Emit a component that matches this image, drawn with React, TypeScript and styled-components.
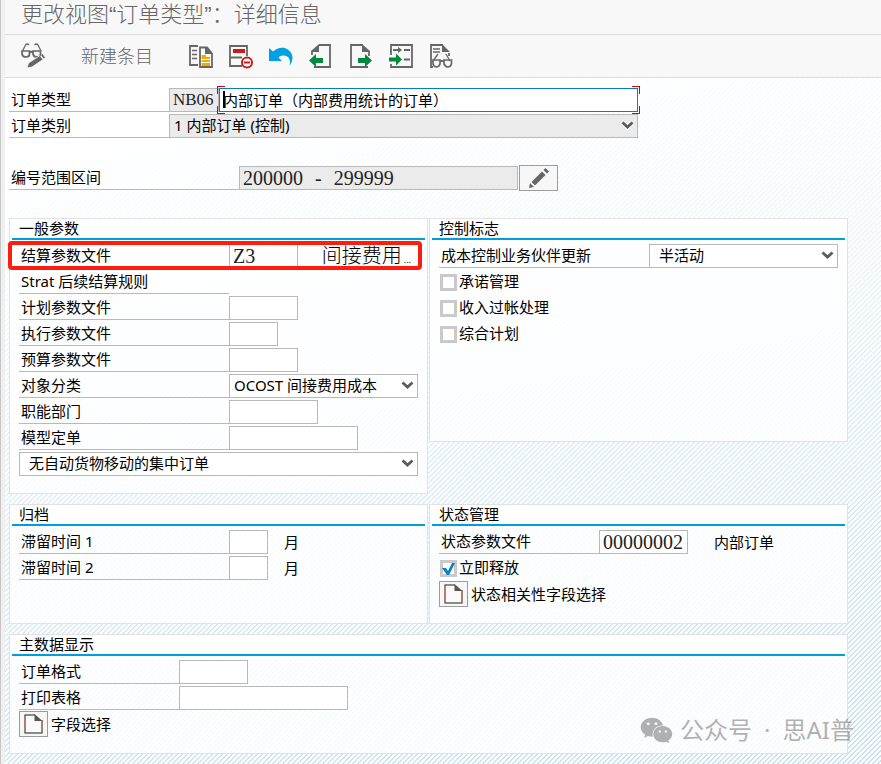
import React, { useState } from "react";
import styled, { createGlobalStyle } from "styled-components";
import { FaWeixin } from "react-icons/fa";

const UI_FONT = '"Noto Sans", "Noto Sans CJK SC", sans-serif';
const DATA_FONT = '"Liberation Serif", "Noto Sans CJK SC", serif';
const LINE = "#b9b9b9";
const ACCENT = "#009de0";
const INK = "#666666";

const GlobalStyle = createGlobalStyle`
  * { box-sizing: border-box; }
  body { margin: 0; font-family: ${UI_FONT}; font-size: 15px; color: #000; background: #fff; }
  button, input, select { font: inherit; color: inherit; margin: 0; }
`;

const Shell = styled.div`
  position: relative;
  display: flex;
  flex-direction: column;
  min-height: 100vh;
  border-left: 1px solid #c6c6c6;
`;

const Frame = styled.div`
  flex: 1;
  display: flex;
  flex-direction: column;
  border-left: 4px solid #f1f0f0;
`;

const TitleBar = styled.header`
  height: 35px;
  padding: 0 16px;
  display: flex;
  align-items: center;
  background: #f8f8f8;
  border-bottom: 1px solid #dcdcdc;
`;

const Title = styled.h1`
  margin: 0;
  padding-bottom: 4px;
  font-family: "Liberation Sans", "Noto Sans CJK SC", sans-serif;
  font-size: 22px;
  line-height: 28px;
  font-weight: 300;
  color: #666;
`;

const Toolbar = styled.nav`
  height: 43px;
  padding: 0 16px;
  display: flex;
  align-items: center;
  gap: 16px;
  background: #f8f8f8;
  border-bottom: 1px solid #dcdcdc;
`;

const ToolButton = styled.button`
  width: 24px;
  height: 28px;
  padding: 0;
  border: 0;
  background: none;
  display: flex;
  align-items: center;
  justify-content: center;
`;

const TextButton = styled.button`
  padding: 0;
  margin: 0 20px;
  border: 0;
  background: none;
  font-size: 18px;
  font-weight: 300;
  line-height: 28px;
  color: #666;
`;

const Body = styled.main`
  flex: 1;
  padding: 10px 33px 10px 4px;
  background:
    linear-gradient(170deg, #fff 8%, rgba(255, 255, 255, 0.8) 25%, rgba(255, 255, 255, 0.4) 55%, rgba(255, 255, 255, 0) 100%),
    linear-gradient(135deg, #fff 25%, #c6e1f1 25% 50%, #fff 50% 75%, #c6e1f1 75%) 0 0 / 5px 5px;
`;

const Rows = styled.div<{ $space?: number }>`
  display: flex;
  flex-direction: column;
  gap: 2px;
  margin-bottom: ${(p) => p.$space ?? 0}px;
`;

const Row = styled.div`
  position: relative;
  display: flex;
  align-items: center;
  height: 24px;
`;

const Label = styled.label<{ $width: number }>`
  flex: none;
  width: ${(p) => p.$width}px;
  height: 24px;
  padding-left: 2px;
  line-height: 23px;
  border-bottom: 1px solid ${LINE};
  white-space: nowrap;
`;

const Input = styled.input<{ $width: number; $size?: number }>`
  flex: none;
  width: ${(p) => p.$width}px;
  height: 24px;
  padding: 0 3px;
  border: 1px solid ${LINE};
  border-radius: 0;
  background: #fff;
  color: #222;
  font-family: ${DATA_FONT};
  font-size: ${(p) => p.$size ?? 20}px;
  line-height: 22px;
  outline: none;
  &:read-only { background: #ebebeb; }
`;

const RangeField = styled.output`
  width: 279px;
  height: 24px;
  padding: 0 3px;
  display: flex;
  gap: 12px;
  border: 1px solid ${LINE};
  background: #ebebeb;
  color: #222;
  font-family: ${DATA_FONT};
  font-size: 20px;
  line-height: 22px;
`;

const FocusField = styled.div`
  position: relative;
  width: 419px;
  height: 24px;
`;

const FocusInput = styled.input`
  width: 100%;
  height: 24px;
  padding: 0 3px 2px;
  border: 1px solid #0a7cc0;
  background: #fff;
  line-height: 20px;
  outline: none;
`;

const FocusCorners = styled.span`
  position: absolute;
  inset: -2px;
  pointer-events: none;
  --c: linear-gradient(#d4040c, #d4040c);
  background:
    var(--c) 0 0 / 8px 1px, var(--c) 0 0 / 1px 8px,
    var(--c) 100% 0 / 8px 1px, var(--c) 100% 0 / 1px 8px,
    var(--c) 0 100% / 8px 1px, var(--c) 0 100% / 1px 8px,
    var(--c) 100% 100% / 8px 1px, var(--c) 100% 100% / 1px 8px;
  background-repeat: no-repeat;
`;

const Caret = styled.span`
  position: absolute;
  left: 4px;
  top: 3px;
  width: 2px;
  height: 17px;
  background: #000;
`;

const SelectBox = styled.div<{ $width: string }>`
  position: relative;
  width: ${(p) => p.$width};
  height: 24px;
`;

const SelectInput = styled.select<{ $muted?: boolean; $indent?: number }>`
  appearance: none;
  width: 100%;
  height: 24px;
  padding: 0 24px 2px ${(p) => p.$indent ?? 4}px;
  border: 1px solid ${LINE};
  border-radius: 0;
  background: ${(p) => (p.$muted ? "#ebebeb" : "#fff")};
  outline: none;
`;

const Chevron = styled.svg`
  position: absolute;
  right: 4px;
  top: 7px;
  pointer-events: none;
`;

const EditButton = styled.button`
  width: 39px;
  height: 26px;
  margin-left: 1px;
  padding: 0;
  display: flex;
  align-items: center;
  justify-content: center;
  border: 1px solid #9c9c9c;
  background: #f7f7f7;
`;

const Panels = styled.div`
  display: grid;
  grid-template-columns: 1fr 1fr;
  column-gap: 1px;
  row-gap: 10px;
`;

const Panel = styled.section<{ $wide?: boolean; $short?: boolean }>`
  position: relative;
  min-width: 0;
  grid-column: ${(p) => (p.$wide ? "1 / -1" : "auto")};
  align-self: ${(p) => (p.$short ? "start" : "stretch")};
  min-height: ${(p) => (p.$short ? 224 : 120)}px;
  padding: 0 2px 17px;
  border: 1px solid #e2e2e2;
  background: rgba(255, 255, 255, 0.8);
`;

const PanelTitle = styled.h2`
  margin: 0 -2px;
  padding: 0 2px;
  background: #fff;
  font-size: 15px;
  font-weight: 400;
  line-height: 19px;
  & > span { display: block; padding-left: 7px; border-bottom: 2px solid ${ACCENT}; }
`;

const PanelRows = styled(Rows)`
  padding: 4px 7px 0;
`;

const Note = styled.span<{ $gap: number }>`
  margin-left: ${(p) => p.$gap}px;
  line-height: 22px;
  white-space: nowrap;
`;

const ProfileText = styled.span`
  flex: 1;
  display: flex;
  align-items: baseline;
  justify-content: flex-end;
  padding-right: 7px;
  padding-top: 3px;
  gap: 2px;
  font-size: 20px;
  font-weight: 300;
  line-height: 24px;
  & > small { font-size: 9px; font-weight: 400; }
`;

const Highlight = styled.span`
  position: absolute;
  inset: -3px -4px -2px -11px;
  border: 4px solid #ff1d0f;
  border-radius: 4px;
  pointer-events: none;
`;

const CheckLabel = styled.label`
  display: flex;
  align-items: center;
  gap: 2px;
  padding-left: 1px;
  line-height: 20px;
`;

const CheckText = styled.span`
  padding-bottom: 2px;
`;

const CheckBox = styled.span`
  position: relative;
  display: flex;
  width: 17px;
  height: 17px;
`;

const CheckInput = styled.input`
  appearance: none;
  width: 17px;
  height: 17px;
  border: 3px solid #c9c9c9;
  background: #fff;
`;

const Tick = styled.svg`
  position: absolute;
  inset: 0;
  pointer-events: none;
`;

const PageButton = styled.button`
  flex: none;
  width: 29px;
  height: 26px;
  padding: 0;
  display: flex;
  align-items: center;
  justify-content: center;
  border: 1px solid #9c9c9c;
  background: #f7f7f7;
`;

const Watermark = styled.div`
  position: absolute;
  right: 27px;
  bottom: 17px;
  display: flex;
  align-items: center;
  gap: 7px;
  font-size: 24px;
  line-height: 34px;
  color: rgba(125, 125, 125, 0.6);
  pointer-events: none;
  white-space: nowrap;
`;

const WatermarkText = styled.span`
  display: flex;
  gap: 12px;
`;

type Option = { id: string; value: string; width?: string; muted?: boolean; indent?: number; label?: string };

function Select({ id, value, width = "189px", muted, indent, label }: Option) {
  return (
    <SelectBox $width={width}>
      <SelectInput id={id} defaultValue={value} $muted={muted} $indent={indent} aria-label={label}>
        <option>{value}</option>
      </SelectInput>
      <Chevron width="13" height="9" viewBox="0 0 13 9">
        <path d="M2 2l4.500 4L11 2" fill="none" stroke="#fff" strokeWidth="5" />
        <path d="M1.500 1.500l5 4.500 5-4.500" fill="none" stroke="#5c5c5c" strokeWidth="2.800" />
      </Chevron>
    </SelectBox>
  );
}

function Check({ text, initial = false }: { text: string; initial?: boolean }) {
  const [on, setOn] = useState(initial);
  return (
    <Row>
      <CheckLabel>
        <CheckBox>
          <CheckInput type="checkbox" checked={on} onChange={() => setOn(!on)} />
          {on && (
            <Tick width="17" height="17" viewBox="0 0 17 17">
              <path d="M2 8h4l2 3 4-8h3L9 15H7z" fill="#0a7fc6" />
            </Tick>
          )}
        </CheckBox>
        <CheckText>{text}</CheckText>
      </CheckLabel>
    </Row>
  );
}

function Field({ id, label, width, labelWidth = 210, value, note }: { id: string; label: string; width: number; labelWidth?: number; value?: string; note?: string }) {
  return (
    <Row>
      <Label htmlFor={id} $width={labelWidth}>{label}</Label>
      <Input id={id} $width={width} defaultValue={value} />
      {note && <Note $gap={width === 39 ? 16 : 26}>{note}</Note>}
    </Row>
  );
}

const PageIcon = () => (
  <svg width="19" height="20" viewBox="0 0 19 20">
    <path d="M1 .5h10.500L18 7v12.500H1z" fill="#fafafa" stroke="none" />
    <path d="M1 1v18M18 6v13" stroke="#8d5b4a" fill="none" strokeWidth="1.500" />
    <path d="M.5 1H11M.5 19H18.500" stroke={INK} fill="none" strokeWidth="1.500" />
    <path d="M10.500 0L18.500 7H10.500z" fill="#555" />
  </svg>
);

const GlassesPencil = () => (
  <svg width="24" height="28" viewBox="0 0 24 28" fill="none" stroke={INK}>
    <path d="M1.500 9L4.500 3Q6 1 8 3M20 9L17 3Q15.500 1 13.500 3" strokeWidth="1.300" />
    <path d="M1 9h7.500v3q0 3-3.500 3t-4-3zM12 9h7.500v3q0 3-3.500 3t-4-3zM8.500 10.500Q10 9 12 10.500" strokeWidth="1.700" />
    <path d="M6 26l1.500-5L19 13.500l3 4L11 25z" fill={INK} stroke="#f8f8f8" strokeWidth=".8" />
    <path d="M20 13l1.500-1 2.500 3.500-1.500 1z" fill={INK} stroke="none" />
  </svg>
);

const CopyIcon = () => (
  <svg width="24" height="28" viewBox="0 0 24 28">
    <path d="M9 4H1v19h8" fill="none" stroke={INK} strokeWidth="1.800" />
    <path d="M3 8.500h5M3 12.500h5M3 16.500h5" stroke={INK} strokeWidth="1.600" />
    <path d="M11 5.500h7l5 6V25H11z" fill="#fff" stroke={INK} strokeWidth="1.800" />
    <path d="M16 5h2l6 7h-8z" fill={INK} />
    <path d="M12.500 13H17v2h4v2h-8.500zM12.500 18H21v2h-8.500zM12.500 21H21v3h-8.500z" fill="#f0ab00" />
  </svg>
);

const DeleteIcon = () => (
  <svg width="24" height="28" viewBox="0 0 24 28" fill="none">
    <path d="M13 24H1V4h17v10M1 15.500h12" stroke={INK} strokeWidth="1.800" />
    <path d="M4 7h12v4H4z" fill="#cc1919" />
    <circle cx="18" cy="20.500" r="5" fill="#fff" stroke="#cc1919" strokeWidth="2" />
    <path d="M15 20.500h6" stroke="#cc1919" strokeWidth="2" />
  </svg>
);

const UndoIcon = () => (
  <svg width="24" height="28" viewBox="0 0 24 28">
    <path d="M0 6l4 3.500C8 5.500 14 4.500 18 7c6 3.500 7.500 10 2.500 17 1.500-6-.500-10-5.500-10.500-2.500 0-4 .5-5.500 2L13 19H0z" fill="#00a0e3" />
  </svg>
);

const PreviousIcon = () => (
  <svg width="24" height="28" viewBox="0 0 24 28">
    <path d="M10 3h11v22H5M3 13V10" fill="none" stroke={INK} strokeWidth="1.800" />
    <path d="M10 2v8H2v-1z" fill={INK} />
    <path d="M0 18.500l7-6.500v4h7v5H7v4z" fill="#008a3b" />
  </svg>
);

const NextIcon = () => (
  <svg width="24" height="28" viewBox="0 0 24 28">
    <path d="M14 3H2v22h17M20 14v-4" fill="none" stroke={INK} strokeWidth="1.800" />
    <path d="M13 2v8h8V9z" fill={INK} />
    <path d="M23 18.500L16 12v4H9v5h7v4z" fill="#008a3b" />
  </svg>
);

const OtherEntryIcon = () => (
  <svg width="24" height="28" viewBox="0 0 24 28">
    <path d="M2 13V3h21v22H2v-3" fill="none" stroke={INK} strokeWidth="1.800" />
    <path d="M4 8h8M15 8h6M15 17.500h6" stroke={INK} strokeWidth="1.800" />
    <path d="M9 5l4 3-4 3z" fill={INK} />
    <path d="M13 17.500L7 11.500v4H0v4h7v4z" fill="#008a3b" />
  </svg>
);

const DetailsIcon = () => (
  <svg width="24" height="28" viewBox="0 0 24 28" fill="none" stroke={INK}>
    <path d="M14 3H2v22h2M20 11v3" strokeWidth="1.800" />
    <path d="M13 2l8 8h-8z" fill={INK} stroke="none" />
    <path d="M4 7h7M4 10h7" strokeWidth="1.600" />
    <path d="M4 19l5-7M21 19l-4-7" strokeWidth="1.300" />
    <path d="M4 18h7v4q-1 3-3.500 3T4 22zM15 18h7.500v4q-1 3-3.500 3t-4-3zM11 20q2-2 4 0" strokeWidth="1.700" />
  </svg>
);

const PencilIcon = () => (
  <svg width="20" height="20" viewBox="0 0 20 20" fill={INK}>
    <path d="M0 20l1-5 4 4zM2.500 14L13 3.500l3.500 3.500L6 17.500zM14.500 2l2-2L20 3.500l-2 2z" />
  </svg>
);

const tools = [
  { name: "复制", Icon: CopyIcon },
  { name: "删除", Icon: DeleteIcon },
  { name: "撤消", Icon: UndoIcon },
  { name: "上一条目", Icon: PreviousIcon },
  { name: "下一条目", Icon: NextIcon },
  { name: "其他条目", Icon: OtherEntryIcon },
  { name: "详细信息", Icon: DetailsIcon },
];

export default function App() {
  return (
    <>
      <GlobalStyle />
      <Shell lang="zh-CN">
        <Frame>
          <TitleBar>
            <Title>更改视图“订单类型”：详细信息</Title>
          </TitleBar>
          <Toolbar>
            <ToolButton aria-label="显示/更改"><GlassesPencil /></ToolButton>
            <TextButton>新建条目</TextButton>
            {tools.map(({ name, Icon }) => (
              <ToolButton key={name} aria-label={name}><Icon /></ToolButton>
            ))}
          </Toolbar>
          <Body>
            <Rows $space={28}>
              <Row>
                <Label htmlFor="order-type" $width={160}>订单类型</Label>
                <Input id="order-type" $width={50} $size={17} defaultValue="NB06" readOnly />
                <FocusField>
                  <FocusInput defaultValue="内部订单（内部费用统计的订单）" aria-label="订单类型描述" />
                  <FocusCorners />
                  <Caret />
                </FocusField>
              </Row>
              <Row>
                <Label htmlFor="order-category" $width={160}>订单类别</Label>
                <Select id="order-category" value="1 内部订单 (控制)" width="469px" muted />
              </Row>
            </Rows>
            <Rows $space={28}>
              <Row>
                <Label htmlFor="number-range" $width={230}>编号范围区间</Label>
                <RangeField id="number-range">
                  <span>200000</span>
                  <span>-</span>
                  <span>299999</span>
                </RangeField>
                <EditButton aria-label="编辑编号范围"><PencilIcon /></EditButton>
              </Row>
            </Rows>
            <Panels>
              <Panel>
                <PanelTitle><span>一般参数</span></PanelTitle>
                <PanelRows>
                  <Row>
                    <Label htmlFor="settlement" $width={210}>结算参数文件</Label>
                    <Input id="settlement" $width={69} defaultValue="Z3" />
                    <ProfileText>间接费用<small>...</small></ProfileText>
                    <Highlight />
                  </Row>
                  <Row>
                    <Label as="span" $width={210}>Strat 后续结算规则</Label>
                  </Row>
                  <Field id="planning" label="计划参数文件" width={69} />
                  <Field id="execution" label="执行参数文件" width={49} />
                  <Field id="budget" label="预算参数文件" width={69} />
                  <Row>
                    <Label htmlFor="object-class" $width={210}>对象分类</Label>
                    <Select id="object-class" value="OCOST 间接费用成本" />
                  </Row>
                  <Field id="functional-area" label="职能部门" width={89} />
                  <Field id="model-order" label="模型定单" width={129} />
                  <Row>
                    <Select id="collective" value="无自动货物移动的集中订单" width="399px" indent={9} label="集中订单" />
                  </Row>
                </PanelRows>
              </Panel>
              <Panel $short>
                <PanelTitle><span>控制标志</span></PanelTitle>
                <PanelRows>
                  <Row>
                    <Label htmlFor="partner-update" $width={210}>成本控制业务伙伴更新</Label>
                    <Select id="partner-update" value="半活动" indent={9} />
                  </Row>
                  <Check text="承诺管理" />
                  <Check text="收入过帐处理" />
                  <Check text="综合计划" />
                </PanelRows>
              </Panel>
              <Panel>
                <PanelTitle><span>归档</span></PanelTitle>
                <PanelRows>
                  <Field id="residence-1" label="滞留时间 1" width={39} note="月" />
                  <Field id="residence-2" label="滞留时间 2" width={39} note="月" />
                </PanelRows>
              </Panel>
              <Panel>
                <PanelTitle><span>状态管理</span></PanelTitle>
                <PanelRows>
                  <Field id="status-profile" label="状态参数文件" labelWidth={160} width={89} value="00000002" note="内部订单" />
                  <Check text="立即释放" initial />
                  <Row>
                    <PageButton id="status-fields" aria-label="状态相关性字段选择"><PageIcon /></PageButton>
                    <Note $gap={3}>状态相关性字段选择</Note>
                  </Row>
                </PanelRows>
              </Panel>
              <Panel $wide>
                <PanelTitle><span>主数据显示</span></PanelTitle>
                <PanelRows>
                  <Field id="order-layout" label="订单格式" labelWidth={160} width={69} />
                  <Field id="print-form" label="打印表格" labelWidth={160} width={169} />
                  <Row>
                    <PageButton id="field-selection" aria-label="字段选择"><PageIcon /></PageButton>
                    <Note $gap={3}>字段选择</Note>
                  </Row>
                </PanelRows>
              </Panel>
            </Panels>
          </Body>
        </Frame>
        <Watermark>
          <FaWeixin size={33} />
          <WatermarkText>
            <span>公众号</span>
            <span>·</span>
            <span>思AI普</span>
          </WatermarkText>
        </Watermark>
      </Shell>
    </>
  );
}
